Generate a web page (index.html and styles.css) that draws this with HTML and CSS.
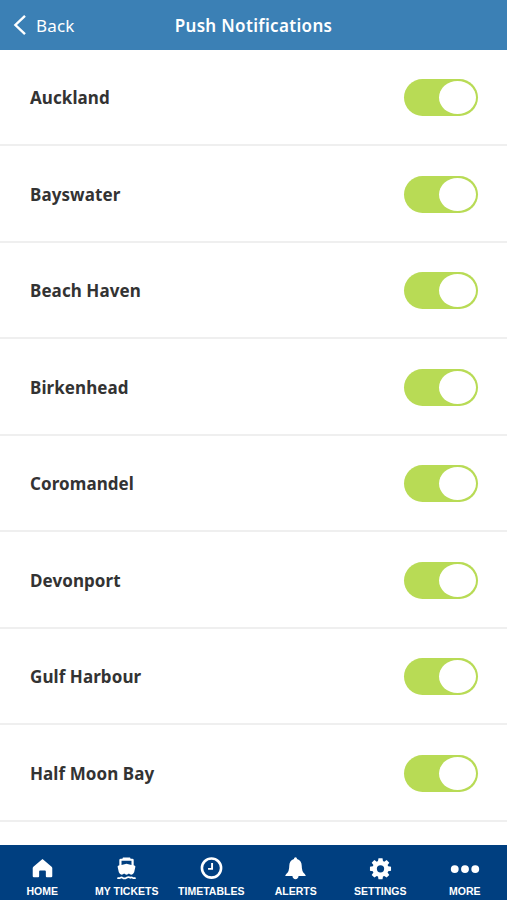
FILE: index.html
```html
<!DOCTYPE html>
<html lang="en">
<head>
    <meta charset="UTF-8">
    <meta name="viewport" content="width=device-width, initial-scale=1.0">
    <title>Push Notifications</title>
    <link rel="stylesheet" href="styles.css">
</head>
<body>
    <header class="header">
        <a class="back" href="#">
            <svg width="14" height="22" viewBox="0 0 14 22"><path d="M12 1.800L2.400 11l9.600 9.200" fill="none" stroke="#fff" stroke-width="2.400"/></svg>
            <span>Back</span>
        </a>
        <h1>Push Notifications</h1>
    </header>

    <main class="list">
        <label class="row"><span>Auckland</span><input type="checkbox" class="toggle" checked></label>
        <label class="row"><span>Bayswater</span><input type="checkbox" class="toggle" checked></label>
        <label class="row"><span>Beach Haven</span><input type="checkbox" class="toggle" checked></label>
        <label class="row"><span>Birkenhead</span><input type="checkbox" class="toggle" checked></label>
        <label class="row"><span>Coromandel</span><input type="checkbox" class="toggle" checked></label>
        <label class="row"><span>Devonport</span><input type="checkbox" class="toggle" checked></label>
        <label class="row"><span>Gulf Harbour</span><input type="checkbox" class="toggle" checked></label>
        <label class="row"><span>Half Moon Bay</span><input type="checkbox" class="toggle" checked></label>
    </main>

    <nav class="tabs">
        <a class="tab" href="#">
            <svg viewBox="0 0 24 24"><path d="M12 2.200l9.500 7.900q.7.600.7 1.500v8.400q0 1.200-1.200 1.200h-4.500q-1 0-1-1v-5q0-1-1-1h-5q-1 0-1 1v5q0 1-1 1H3q-1.200 0-1.200-1.200v-8.400q0-.9.700-1.500z"/></svg>
            <span>HOME</span>
        </a>
        <a class="tab" href="#">
            <svg viewBox="0 0 24 24"><path fill-rule="evenodd" d="M8.300.5h7.400l.6 1.200H18q1.500 0 1.500 1.500v5.500l1.200.5q.8.400.5 1.200L20 15.900q-1 2.500-3 2.500-1.500 0-2.500-1.200-1 1.200-2.500 1.200t-2.500-1.200Q8.500 18.400 7 18.400q-2 0-3-2.500l-1.200-5.500q-.3-.8.500-1.200l1.200-.5V3.200Q4.500 1.700 6 1.700h1.700zM6.800 4v4.300L12 7l5.200 1.300V4z"/><path d="M2.500 21.800q1.600.8 3.200-.2 1.100-.8 2.200 0 2.050 1.400 4.100 0t4.100 0q1.100-.8 2.200 0 1.600 1 3.200.2" fill="none" stroke="#fff" stroke-width="1.800"/></svg>
            <span>MY TICKETS</span>
        </a>
        <a class="tab" href="#">
            <svg viewBox="0 0 24 24"><g fill="none" stroke="#fff"><circle cx="12" cy="11.500" r="10" stroke-width="2.700"/><path d="M12.600 6.200v6.200H8.400" stroke-width="2"/></g></svg>
            <span>TIMETABLES</span>
        </a>
        <a class="tab" href="#">
            <svg viewBox="0 0 24 24"><path d="M12 .3q1.600 0 1.600 1.700 4.900 1.400 4.900 7.200 0 6.200 2.900 8.400 1.300 1.300 1.300 2.300h-7.500q-.4 3.300-3.200 3.300t-3.200-3.300H1.300q0-1 1.300-2.300 2.900-2.200 2.900-8.400 0-5.800 4.900-7.200Q10.400.3 12 .3z"/></svg>
            <span>ALERTS</span>
        </a>
        <a class="tab" href="#">
            <svg viewBox="0 0 24 24"><path fill-rule="evenodd" d="M9.900 1.300h4.200l.5 3 1.300.6 2.500-1.800 2.800 2.800-1.800 2.500.6 1.300 3 .5v4.200l-3 .5-.6 1.300 1.800 2.500-2.800 2.800-2.500-1.800-1.300.6-.5 3H9.900l-.5-3-1.300-.6-2.500 1.800-2.800-2.800 1.800-2.500-.6-1.300-3-.5v-4.200l3-.5.6-1.300-1.800-2.500 2.800-2.800 2.500 1.800 1.300-.6zM12 8.500a3.800 3.800 0 1 0 0 7.600 3.800 3.800 0 0 0 0-7.600z"/></svg>
            <span>SETTINGS</span>
        </a>
        <a class="tab" href="#">
            <svg class="dots" viewBox="0 0 30 24"><circle cx="4.300" cy="12.600" r="4.100"/><circle cx="15" cy="12.600" r="4.100"/><circle cx="25.700" cy="12.600" r="4.100"/></svg>
            <span>MORE</span>
        </a>
    </nav>
</body>
</html>
```
FILE: styles.css
```css
* {
    box-sizing: border-box;
}
body {
    margin: 0;
    height: 100vh;
    display: flex;
    flex-direction: column;
    overflow: hidden;
    background-color: #fff;
    font-family: 'Noto Sans', sans-serif;
}
a {
    color: #fff;
    text-decoration: none;
}
.header {
    display: grid;
    grid-template-columns: 1fr auto 1fr;
    align-items: center;
    flex: none;
    height: 49.5px;
    padding: 1px 13px 0;
    background-color: #3b80b5;
    color: #fff;
}
.header h1 {
    margin: 0;
    font-size: 17px;
    font-weight: 600;
    letter-spacing: 0.33px;
}
.back {
    display: flex;
    align-items: center;
    gap: 9px;
    font-size: 17px;
    letter-spacing: 0.2px;
}
.list {
    flex: 1;
    min-height: 0;
    overflow: hidden;
}
.row {
    display: flex;
    justify-content: space-between;
    align-items: center;
    height: 96.5px;
    padding: 1.5px 29px 0 30px;
    border-bottom: 2px solid #efefef;
    color: #333;
    font-size: 17px;
    font-weight: bold;
    letter-spacing: 0.08px;
}
.toggle {
    appearance: none;
    display: flex;
    width: 74px;
    height: 37px;
    margin: 0;
    padding: 2px;
    border-radius: 19px;
    background-color: #b8db55;
}
.toggle::before {
    content: "";
    width: 37px;
    height: 33px;
    border-radius: 50%;
    background-color: #fff;
}
.toggle:checked {
    justify-content: flex-end;
}
.tabs {
    display: grid;
    grid-template-columns: repeat(6, 1fr);
    flex: none;
    height: 55px;
    background-color: #003f80;
}
.tab {
    display: flex;
    flex-direction: column;
    align-items: center;
    gap: 5px;
    padding-top: 12px;
    font-family: 'Liberation Sans', Arial, sans-serif;
    font-size: 10.5px;
    font-weight: bold;
    line-height: 13px;
    white-space: nowrap;
}
.tab svg {
    width: 23px;
    height: 23px;
    fill: #fff;
}
.tab .dots {
    width: 30px;
}
```
